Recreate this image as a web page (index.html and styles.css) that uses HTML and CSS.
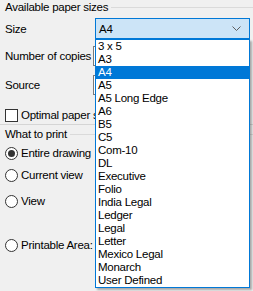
FILE: index.html
```html
<!DOCTYPE html>
<html>
<head>
<meta charset="utf-8">
<link rel="stylesheet" href="styles.css">
</head>
<body>
<div class="panel">
  <div class="group-title title-paper"><span>Available paper sizes</span><div class="rule"></div></div>
  <div class="row row-size">
    <span class="label">Size</span>
    <div class="combo">
      <span class="combo-text">A4</span>
      <svg class="chev" width="9" height="5" viewBox="0 0 9 5"><path d="M0.5 0.5 L4.5 4.5 L8.5 0.5" fill="none" stroke="#5f5f5f" stroke-width="1"/></svg>
    </div>
  </div>
  <div class="row row-copies">
    <span class="label">Number of copies</span>
    <div class="spin"></div>
  </div>
  <div class="row row-source">
    <span class="label">Source</span>
    <div class="spin"></div>
  </div>
  <div class="row row-check">
    <span class="checkbox"></span><span class="clip">Optimal paper size</span>
  </div>
  <div class="sep"></div>
  <div class="group-title title-print"><span>What to print</span><div class="rule"></div></div>
  <div class="row row-radio r1"><span class="radio checked"></span><span>Entire drawing</span></div>
  <div class="row row-radio r2"><span class="radio"></span><span>Current view</span></div>
  <div class="row row-radio r3"><span class="radio"></span><span>View</span></div>
  <div class="row row-radio r4"><span class="radio"></span><span>Printable Area:</span></div>
</div>
<ul class="dropdown">
  <li>3 x 5</li>
  <li>A3</li>
  <li class="selected">A4</li>
  <li>A5</li>
  <li>A5 Long Edge</li>
  <li>A6</li>
  <li>B5</li>
  <li>C5</li>
  <li>Com-10</li>
  <li>DL</li>
  <li>Executive</li>
  <li>Folio</li>
  <li>India Legal</li>
  <li>Ledger</li>
  <li>Legal</li>
  <li>Letter</li>
  <li>Mexico Legal</li>
  <li>Monarch</li>
  <li>User Defined</li>
</ul>
</body>
</html>
```
FILE: styles.css
```css
html, body {
  margin: 0;
  padding: 0;
  background: #f0f0f0;
  width: 253px;
  height: 291px;
  overflow: hidden;
  font-family: "Liberation Sans", Arial, sans-serif;
  font-size: 11.5px;
  letter-spacing: -0.25px;
  color: #000;
}
.panel {
  display: flex;
  flex-direction: column;
  padding-left: 5px;
}
.group-title {
  display: flex;
  align-items: center;
  height: 14px;
  gap: 3px;
  white-space: nowrap;
}
.group-title .rule {
  flex: 1;
  border-top: 1px solid #dadada;
  margin-right: -5px;
}
.title-paper { margin-top: 0; }
.row {
  display: flex;
  align-items: center;
  white-space: nowrap;
}
.label {
  width: 90px;
  flex: none;
  overflow: visible;
}
.row-size { height: 21px; margin-top: 4px; }
.combo {
  box-sizing: border-box;
  width: 155px;
  height: 21px;
  border: 1px solid #0078d7;
  background: #cce4f7;
  display: flex;
  align-items: center;
  padding: 0 4px 0 3px;
}
.combo-text { flex: 1; }
.chev { margin-right: 4px; }
.row-copies { height: 20px; margin-top: 7px; }
.row-source { height: 20px; margin-top: 9px; }
.spin {
  box-sizing: border-box;
  width: 120px;
  height: 20px;
  margin-left: -2px;
  border: 1px solid #7a7a7a;
  background: #fff;
}
.row-check { height: 14px; margin-top: 13px; gap: 3px; }
.clip {
  width: 74px;
  overflow: hidden;
}
.checkbox {
  box-sizing: border-box;
  width: 13px;
  height: 13px;
  border: 1px solid #333;
  background: #fff;
}
.sep {
  height: 0;
  border-top: 1px solid #d5d5d5;
  margin-left: -5px;
  margin-top: 2px;
}
.title-print { margin-top: 2px; }
.row-radio { height: 14px; gap: 3px; }
.r1 { margin-top: 5px; }
.r2 { margin-top: 8px; }
.r3 { margin-top: 12px; }
.r4 { margin-top: 30px; }
.radio {
  box-sizing: border-box;
  width: 13px;
  height: 13px;
  border: 1px solid #333;
  border-radius: 50%;
  background: #fff;
  position: relative;
}
.radio.checked::after {
  content: "";
  position: absolute;
  left: 2px;
  top: 2px;
  width: 7px;
  height: 7px;
  border-radius: 50%;
  background: #333;
}
.dropdown {
  position: absolute;
  left: 95px;
  top: 39px;
  box-sizing: border-box;
  width: 155px;
  margin: 0;
  padding: 0;
  list-style: none;
  background: #fff;
  border: 1px solid #0078d7;
  box-shadow: 2px 2px 2px rgba(0, 0, 0, 0.3);
}
.dropdown li {
  height: 13px;
  line-height: 13px;
  padding-left: 2px;
  white-space: nowrap;
}
.dropdown li.selected {
  background: #0078d7;
  color: #fff;
}
```
